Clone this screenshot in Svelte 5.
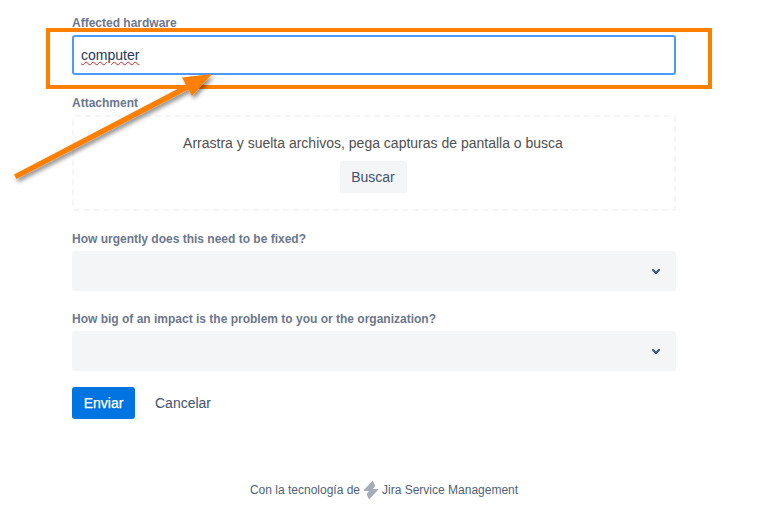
<script>
  const selects = [
    'How urgently does this need to be fixed?',
    'How big of an impact is the problem to you or the organization?'
  ];
</script>

<div class="page">
  <form class="form">
    <div class="label">Affected hardware</div>
    <div class="text-input"><span class="misspelled">computer</span></div>

    <div class="label attach-label">Attachment</div>
    <div class="dropzone">
      <p>Arrastra y suelta archivos, pega capturas de pantalla o busca</p>
      <button type="button" class="browse">Buscar</button>
    </div>

    {#each selects as text}
      <div class="label select-label">{text}</div>
      <div class="select">
        <svg width="24" height="24" viewBox="0 0 24 24">
          <path d="M8.3 10.3a1 1 0 0 1 1.4 0l2.3 2.3 2.3-2.3a1 1 0 1 1 1.4 1.4l-3 3a1 1 0 0 1-1.4 0l-3-3a1 1 0 0 1 0-1.4z" fill="#42526e" />
        </svg>
      </div>
    {/each}

    <div class="actions">
      <button type="button" class="submit">Enviar</button>
      <button type="button" class="cancel">Cancelar</button>
    </div>
  </form>

  <footer class="footer">
    <span>Con la tecnología de</span>
    <svg width="16" height="20" viewBox="0 0 16 20">
      <path d="M9.8 0.5 L0.6 10.2 Q0.2 10.9 1 10.9 L8 10.9 L12 6.4 Q12.3 5.8 12 5.2 Z" fill="#a5adba" />
      <path d="M6 19.5 L15.2 9.8 Q15.6 9.1 14.8 9.1 L8 9.1 L3.8 13.6 Q3.5 14.2 3.8 14.8 Z" fill="#a5adba" />
    </svg>
    <span>Jira Service Management</span>
  </footer>

  <!-- annotation drawn on top of the screenshot -->
  <div class="highlight"></div>
  <svg class="arrow" width="760" height="520" viewBox="0 0 760 520">
    <defs>
      <filter id="shadow" x="-10%" y="-10%" width="125%" height="125%">
        <feDropShadow dx="2" dy="3" stdDeviation="2" flood-color="#000" flood-opacity="0.45" />
      </filter>
    </defs>
    <g filter="url(#shadow)" fill="#ff8000">
      <path d="M14 174.5 L187 84 L189.5 89 L16.5 179 Z" />
      <path d="M212 74 L182 77.5 L192 96 Z" />
    </g>
  </svg>
</div>

<style>
  :global(body) {
    margin: 0;
    background: #fff;
  }

  .page {
    position: relative;
    width: 760px;
    height: 520px;
    overflow: hidden;
    font-family: "Liberation Sans", Arial, sans-serif;
    font-size: 14px;
    color: #172b4d;
  }

  .form {
    display: flex;
    flex-direction: column;
    width: 604px;
    margin-left: 72px;
    padding-top: 15px;
  }

  .label {
    height: 16px;
    margin-bottom: 4px;
    font-size: 12px;
    line-height: 16px;
    font-weight: 700;
    color: #6b778c;
  }

  .text-input {
    box-sizing: border-box;
    display: flex;
    align-items: center;
    height: 40px;
    padding: 0 7px;
    border: 2px solid #4c9aff;
    border-radius: 3px;
    background: #fff;
    color: #253858;
  }

  .misspelled {
    text-decoration: underline wavy #e0201c 1px;
    text-underline-offset: 1px;
  }

  .attach-label {
    margin-top: 20px;
  }

  .dropzone {
    box-sizing: border-box;
    display: flex;
    flex-direction: column;
    align-items: center;
    height: 96px;
    border: 2px dashed #f4f5f7;
    border-radius: 3px;
  }

  .dropzone p {
    margin: 16px 0 8px;
    line-height: 20px;
    color: #505050;
    transform: translateX(-1px);
  }

  .browse {
    width: 67px;
    height: 32px;
    margin-right: 2px;
    padding: 0;
    border: none;
    border-radius: 3px;
    background: #f4f5f7;
    font: 14px "Liberation Sans", Arial, sans-serif;
    color: #42526e;
  }

  .select-label {
    margin-top: 20px;
  }

  .select {
    display: flex;
    align-items: center;
    justify-content: flex-end;
    height: 40px;
    padding-right: 8px;
    border-radius: 3px;
    background: #f4f5f7;
  }

  .actions {
    display: flex;
    gap: 8px;
    margin-top: 16px;
  }

  .submit,
  .cancel {
    height: 32px;
    border: none;
    border-radius: 3px;
    font: 14px "Liberation Sans", Arial, sans-serif;
  }

  .submit {
    width: 63px;
    background: #0074e0;
    color: #fff;
    -webkit-text-stroke: 0.25px #fff;
  }

  .cancel {
    width: 80px;
    background: none;
    color: #42526e;
  }

  .footer {
    display: flex;
    align-items: center;
    justify-content: center;
    gap: 3px;
    width: 768px;
    margin-top: 61px;
    font-size: 12px;
    line-height: 20px;
    color: #505f79;
  }

  .highlight {
    position: absolute;
    left: 46px;
    top: 28px;
    width: 658px;
    height: 53px;
    border: 4px solid #ff8000;
  }

  .arrow {
    position: absolute;
    left: 0;
    top: 0;
    pointer-events: none;
  }
</style>
